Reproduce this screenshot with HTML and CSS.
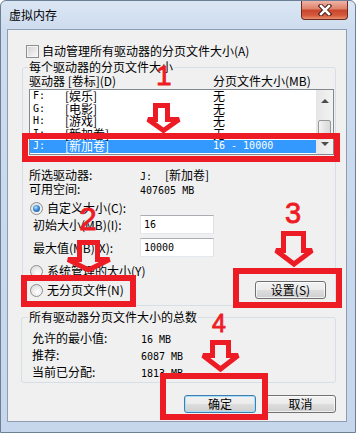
FILE: index.html
```html
<!DOCTYPE html>
<html>
<head>
<meta charset="utf-8">
<link rel="stylesheet" href="styles.css">
</head>
<body>
<div class="window">
  <div class="titlebar">
    <span class="title">虚拟内存</span>
    <div class="close">
      <svg width="14" height="12" viewBox="0 0 14 12">
        <path d="M3 2 L11 10 M11 2 L3 10" stroke="#4a1a14" stroke-width="4.5" stroke-linecap="square"/>
        <path d="M3 2 L11 10 M11 2 L3 10" stroke="#ffffff" stroke-width="2.5" stroke-linecap="square"/>
      </svg>
    </div>
  </div>
  <div class="client">
    <div class="check-row"><span class="checkbox"></span><span>自动管理所有驱动器的分页文件大小(A)</span></div>
    <fieldset class="group g1">
      <legend>每个驱动器的分页文件大小</legend>
      <div class="list-head"><span class="col-drive">驱动器 [卷标](D)</span><span>分页文件大小(MB)</span></div>
      <div class="listbox">
        <div class="rows">
          <div class="row"><span class="c1 num">F:</span><span class="c2">[娱乐]</span><span class="c3">无</span></div>
          <div class="row"><span class="c1 num">G:</span><span class="c2">[电影]</span><span class="c3">无</span></div>
          <div class="row"><span class="c1 num">H:</span><span class="c2">[游戏]</span><span class="c3">无</span></div>
          <div class="row"><span class="c1 num">I:</span><span class="c2">[新加卷]</span><span class="c3">无</span></div>
          <div class="row sel"><span class="c1 num">J:</span><span class="c2">[新加卷]</span><span class="c3 num">16 - 10000</span></div>
        </div>
        <div class="scrollbar">
          <div class="sb-up"><span class="tri-up"></span></div>
          <div class="sb-track"><div class="thumb"></div></div>
          <div class="sb-down"><span class="tri-down"></span></div>
        </div>
      </div>
      <div class="info first"><span class="lab">所选驱动器:</span><span class="drv num">J:</span><span>[新加卷]</span></div>
      <div class="info"><span class="lab">可用空间:</span><span class="num">407605 MB</span></div>
      <div class="radio-row r1"><span class="radio on"></span><span>自定义大小(C):</span></div>
      <div class="field-row"><span class="flab">初始大小(MB)(I):</span><span class="input num">16</span></div>
      <div class="field-row f2"><span class="flab">最大值(MB)(X):</span><span class="input num">10000</span></div>
      <div class="radio-row r2"><span class="radio"></span><span>系统管理的大小(Y)</span></div>
      <div class="radio-row r3"><span class="radio"></span><span>无分页文件(N)</span><button class="btn set">设置(S)</button></div>
    </fieldset>
    <fieldset class="group g2">
      <legend>所有驱动器分页文件大小的总数</legend>
      <div class="sum first"><span class="lab">允许的最小值:</span><span class="num">16 MB</span></div>
      <div class="sum"><span class="lab">推荐:</span><span class="num">6087 MB</span></div>
      <div class="sum"><span class="lab">当前已分配:</span><span class="num">1813 MB</span></div>
    </fieldset>
    <div class="buttons"><button class="btn ok">确定</button><button class="btn cancel">取消</button></div>
  </div>
</div>
<svg class="annot" width="356" height="433" viewBox="0 0 356 433">
  <g fill="none" stroke="#ed1c24" stroke-width="6">
    <rect x="25" y="136" width="312" height="23"/>
    <rect x="24" y="278" width="109" height="26"/>
    <rect x="236" y="271" width="103" height="34"/>
    <rect x="163" y="376" width="102" height="41"/>
  </g>
  <g fill="none" stroke="#ed1c24" stroke-width="5" stroke-linejoin="miter" stroke-miterlimit="2">
    <polygon points="155.5,105.5 167.5,105.5 167.5,119.5 179,119.5 163.5,130.5 148,119.5 155.5,119.5"/>
    <polygon points="79.5,242.5 97.5,242.5 97.5,259.5 109.5,259.5 88.5,270 68,259.5 79.5,259.5"/>
    <polygon points="283.5,233.5 303.5,233.5 303.5,250.5 312,250.5 294,264 276,250.5 283.5,250.5"/>
    <polygon points="212.5,342.5 228.5,342.5 228.5,355.5 238,355.5 220.5,369 203,355.5 212.5,355.5"/>
  </g>
  <g fill="#ed1c24" stroke="#ed1c24" stroke-width="0.8" class="nums">
    <text x="156" y="85" font-size="28">1</text>
    <text x="79" y="230" font-size="32">2</text>
    <text x="285" y="223" font-size="29">3</text>
    <text x="212" y="332" font-size="25">4</text>
  </g>
</svg>
</body>
</html>
```

FILE: styles.css
```css
* { box-sizing: border-box; }
html, body { margin: 0; padding: 0; }
body {
  position: relative;
  width: 356px;
  height: 433px;
  overflow: hidden;
  background: #ffffff;
  font-family: "Noto Sans CJK SC", sans-serif;
  font-size: 12px;
  color: #000;
}
.num { font-family: "DejaVu Sans Mono", monospace; font-size: 10px; }

.window {
  width: 356px;
  height: 433px;
  display: flex;
  flex-direction: column;
  border: 1px solid #6d7f96;
  border-radius: 6px 6px 0 0;
  background: linear-gradient(#dbe6f4, #cddcee 28px, #c6d7ec);
}
.titlebar {
  flex: none;
  height: 28px;
  display: flex;
  align-items: flex-start;
  padding-left: 8px;
}
.title { margin-top: 7px; line-height: 14px; }
.close {
  margin-left: auto;
  margin-right: 7px;
  width: 47px;
  height: 19px;
  border: 1px solid #6a2b22;
  border-top: none;
  border-radius: 0 0 4px 4px;
  background: linear-gradient(#efb3a6, #de8068 45%, #c8452c 50%, #d45a3c 80%, #ea9171);
  display: flex;
  align-items: center;
  justify-content: center;
}
.client {
  margin: 0 8px 10px 6px;
  height: 394px;
  border: 1px solid #8e9db3;
  background: #f0f0f0;
}

.check-row {
  display: flex;
  align-items: center;
  height: 14px;
  line-height: 14px;
  margin-top: 14px;
  padding-left: 18px;
}
.checkbox {
  flex: none;
  width: 13px;
  height: 13px;
  margin-right: 3px;
  border: 1px solid #8e8f8f;
  background: linear-gradient(135deg, #d0d0d0, #fbfbfb);
  box-shadow: inset 0 0 0 1px #f4f4f4;
}

.group {
  margin: 0;
  padding: 0;
  min-width: 0;
  border: 1px solid #d5dfe5;
  border-radius: 3px;
}
.group legend {
  padding: 0 1px;
  margin-left: 5px;
  height: 14px;
  line-height: 14px;
}
.g1 { margin: 2px 0 0 14px; width: 314px; padding-bottom: 6px; }
.g2 { margin: 4px 0 0 13px; width: 315px; padding: 5px 0 2px 0; }
.g2 legend { margin-left: 6px; }

.list-head { display: flex; height: 14px; line-height: 14px; padding-left: 6px; }
.col-drive { width: 184px; }

.listbox {
  display: flex;
  margin: 1px 0 0 6px;
  width: 305px;
  height: 66px;
  border: 1px solid #828790;
  background: #fff;
}
.rows { flex: 1; }
.row { display: flex; height: 12.5px; line-height: 12.5px; padding-left: 3px; white-space: nowrap; }
.row .c1 { width: 32px; }
.row .c2 { width: 148px; }
.row.sel { background: #3399ff; color: #fff; }
.scrollbar {
  flex: none;
  width: 17px;
  display: flex;
  flex-direction: column;
  background: linear-gradient(90deg, #e6e6e6, #f3f3f3);
}
.sb-up { height: 17px; display: flex; justify-content: center; padding-top: 9px; }
.sb-down { height: 17px; display: flex; justify-content: center; padding-top: 5px; }
.sb-track { height: 30px; padding-top: 13px; }
.thumb {
  margin: 0 2px;
  height: 15px;
  border: 1px solid #979797;
  border-radius: 2px;
  background: linear-gradient(90deg, #f4f4f4, #e4e4e4 50%, #d9d9d9);
}
.tri-up { width: 0; height: 0; border-left: 4px solid transparent; border-right: 4px solid transparent; border-bottom: 4px solid #4d4d4d; }
.tri-down { width: 0; height: 0; border-left: 4px solid transparent; border-right: 4px solid transparent; border-top: 4px solid #4d4d4d; }

.info { display: flex; align-items: baseline; height: 14px; line-height: 14px; margin-left: 6px; }
.info.first { margin-top: 13px; }
.info .lab { width: 111px; }
.info .drv { width: 25px; }

.radio-row { display: flex; align-items: center; height: 14px; line-height: 14px; margin-left: 7px; }
.r1 { margin-top: 5px; }
.r2 { margin-top: 7px; }
.r3 { margin-top: 3px; height: 18px; }
.radio {
  flex: none;
  width: 13px;
  height: 13px;
  margin-right: 4px;
  border-radius: 50%;
  border: 1px solid #8e8f8f;
  background: radial-gradient(circle at 60% 65%, #ffffff, #e2e2e2 70%, #d0d0d0);
  display: flex;
  align-items: center;
  justify-content: center;
}
.radio.on::after {
  content: "";
  width: 7px;
  height: 7px;
  border-radius: 50%;
  background: radial-gradient(circle at 40% 35%, #b9e3fb, #3a8ad8 45%, #17508f);
}

.field-row { display: flex; align-items: center; height: 19px; margin-left: 10px; }
.f2 { margin-top: 4px; }
.flab { width: 107px; line-height: 14px; }
.input {
  width: 74px;
  height: 19px;
  border: 1px solid;
  border-color: #abadb3 #dbdfe6 #e3e9ef #e2e3ea;
  background: #fff;
  padding-left: 3px;
  line-height: 17px;
}

.btn {
  height: 18px;
  padding: 0;
  margin: 0;
  border: 1px solid #707070;
  border-radius: 3px;
  background: linear-gradient(#f2f2f2 0%, #ebebeb 48%, #dddddd 52%, #cfcfcf 100%);
  box-shadow: inset 0 0 0 1px rgba(255,255,255,0.7);
  font-family: "Noto Sans CJK SC", sans-serif;
  font-size: 12px;
  line-height: 16px;
  color: #000;
}
.set { width: 71px; margin-left: auto; margin-right: 9px; }

.sum { display: flex; align-items: baseline; height: 17px; line-height: 17px; margin-left: 10px; }
.sum .lab { width: 109px; }

.buttons { display: flex; justify-content: flex-end; gap: 9px; margin-top: 12px; padding-right: 10px; }
.ok { width: 72px; border-color: #3c7fb1; box-shadow: inset 0 0 0 1px #a9dcf6; }
.cancel { width: 71px; }

.annot { position: absolute; top: 0; left: 0; }
.nums text { font-family: "Liberation Sans", sans-serif; }
```
